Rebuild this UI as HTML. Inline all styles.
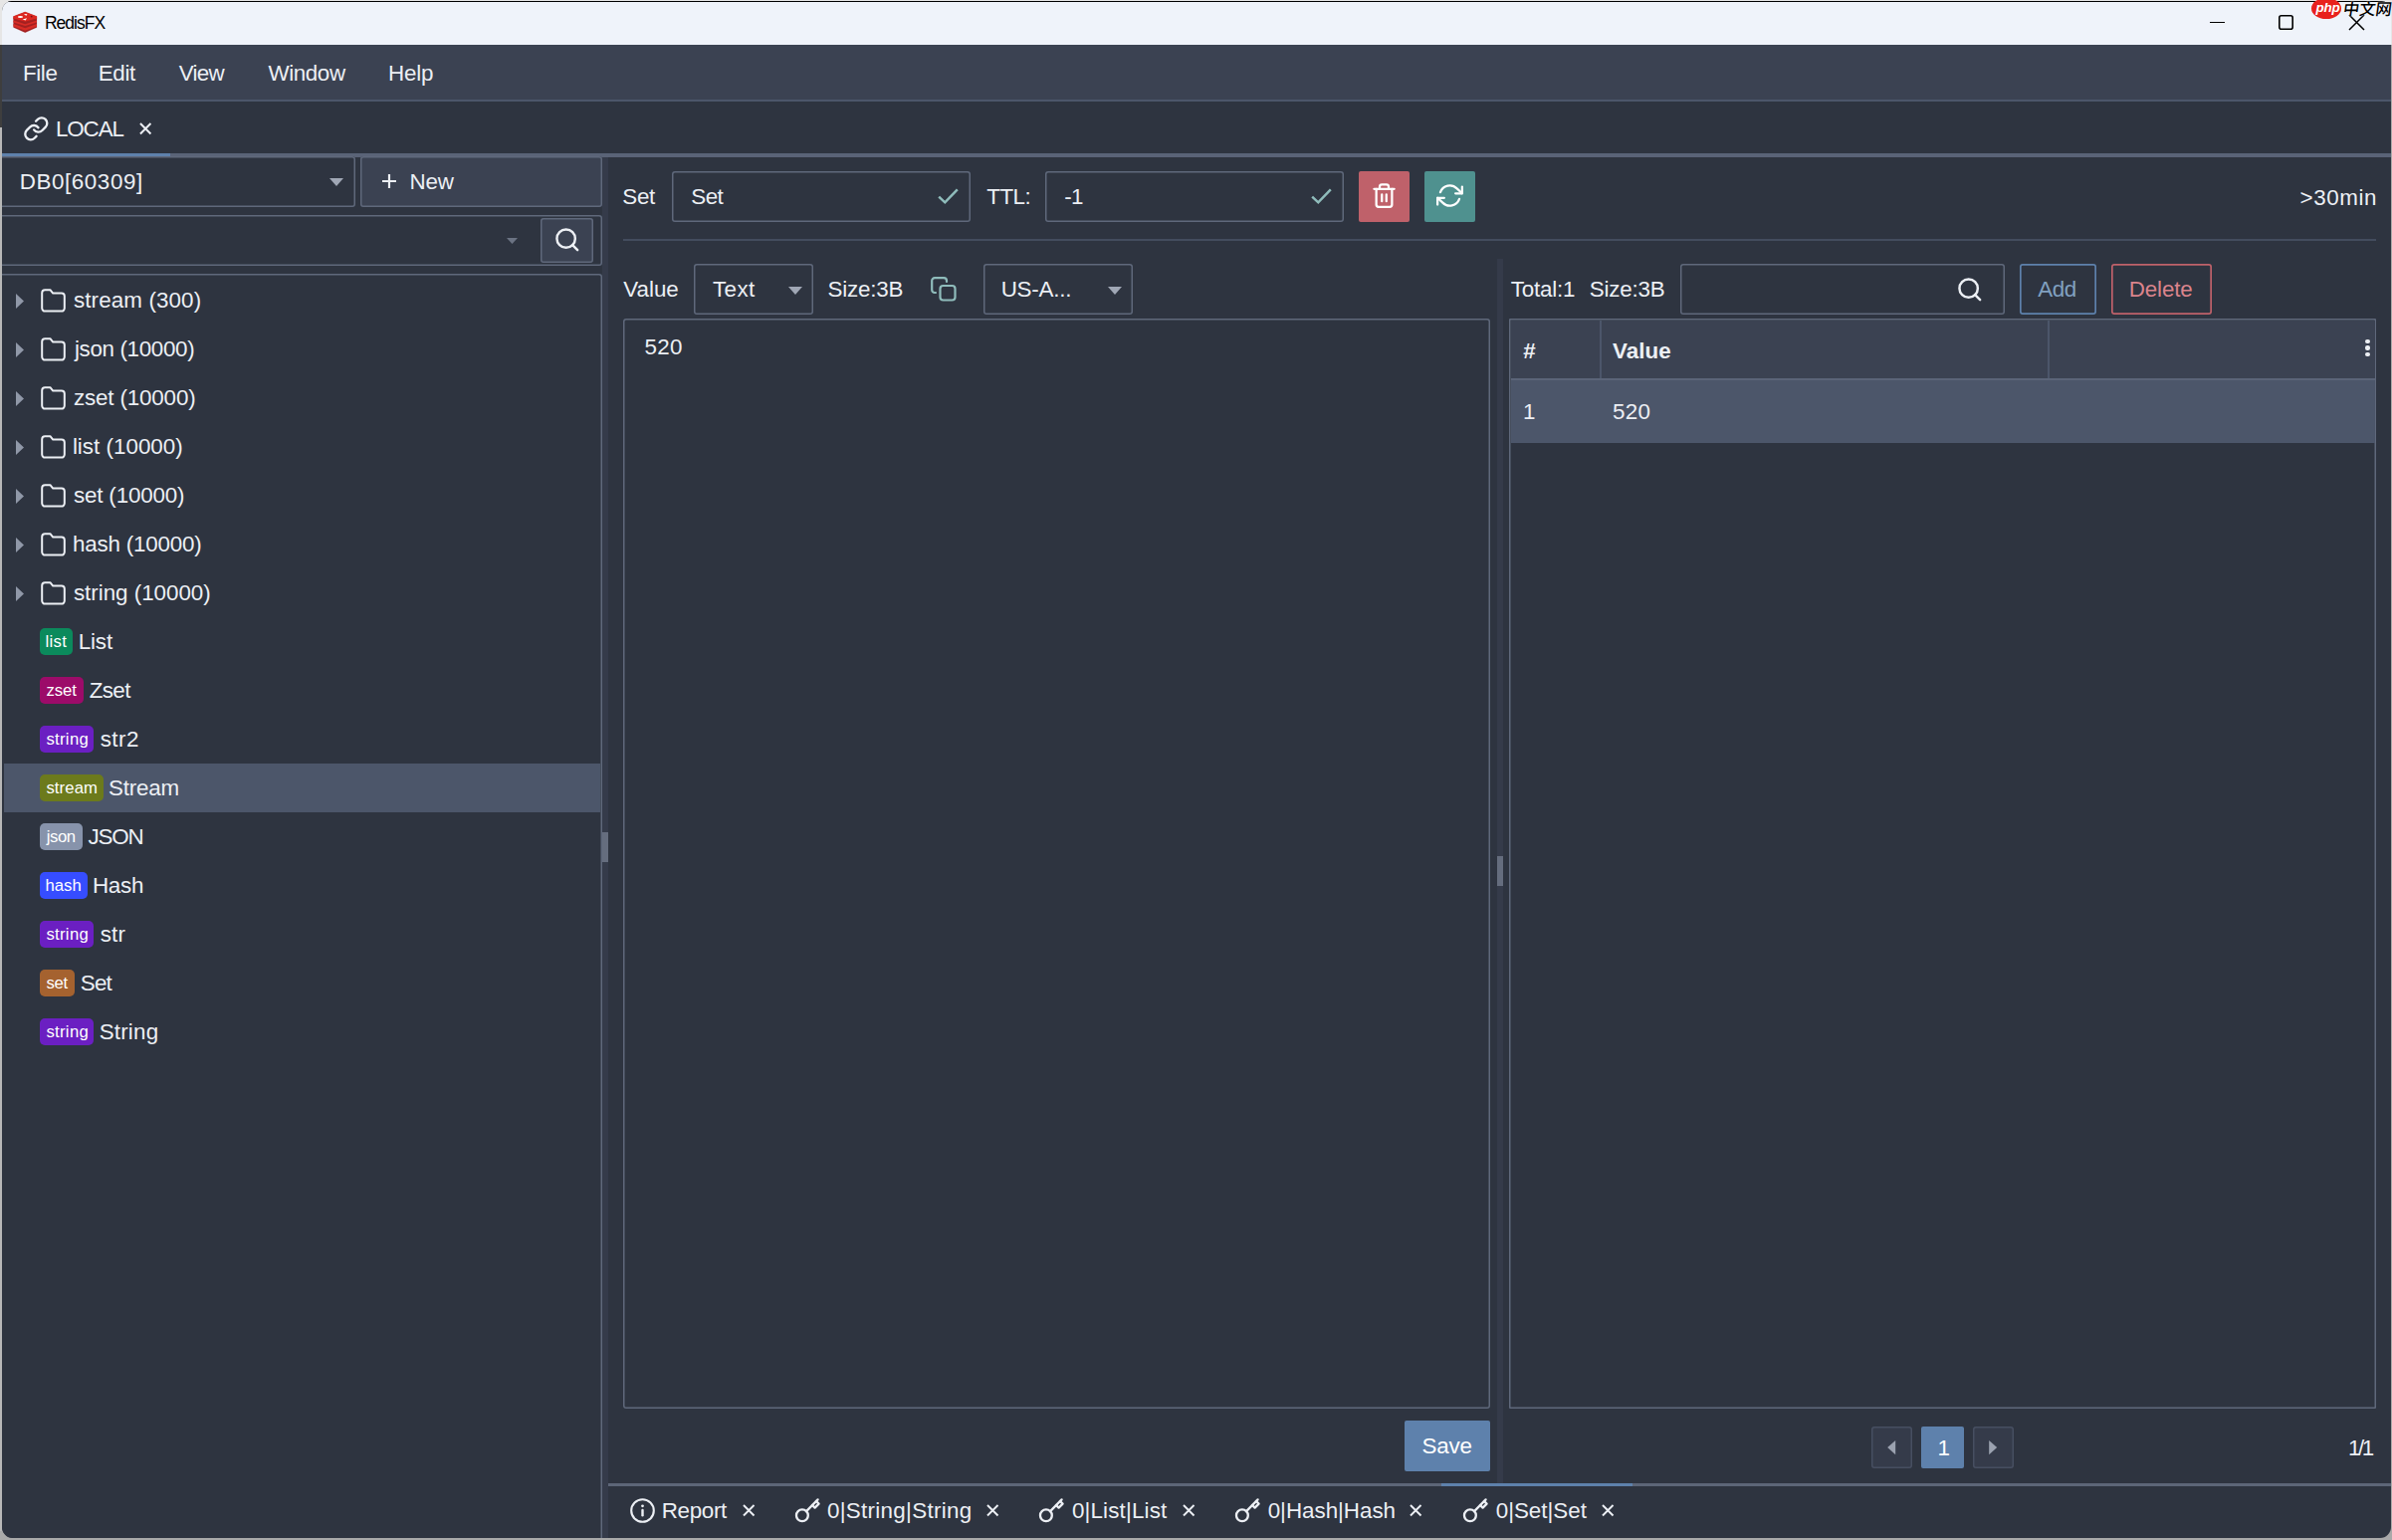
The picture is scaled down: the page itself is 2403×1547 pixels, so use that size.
<!DOCTYPE html><html lang="en"><head><meta charset="utf-8"><title>RedisFX</title><style>
*{box-sizing:border-box;margin:0;padding:0}
html,body{width:2403px;height:1547px;overflow:hidden}
body{background:#a9a9a9;font-family:"Liberation Sans","Noto Sans CJK SC",sans-serif;font-size:21px;color:#eceff4;position:relative}
.a{position:absolute}
.t{position:absolute;white-space:nowrap;line-height:24px;font-size:21px;color:#eceff4;letter-spacing:.55px}
.win{position:absolute;left:2px;top:1px;width:2399.8px;height:1543.8px;background:#2e3440;border-radius:10px 10px 11px 11px;overflow:hidden}
.box{position:absolute;border-radius:3px;background:#2e3440}
.sub{background:#3b4252}
.badge{position:absolute;height:27px;border-radius:5px;color:#fff;font-size:16.5px;line-height:27px;text-align:center;letter-spacing:.3px;white-space:nowrap}
svg{position:absolute;overflow:visible}
</style></head><body>
<div class="a" style="left:0;top:0;width:2403px;height:45px;background:#e6e6e6"></div>
<div class="a" style="left:0;top:45px;width:3px;height:82.5px;background:#3e3e3e"></div>
<div class="a" style="left:0;top:127.5px;width:3px;height:1410px;background:#b8b8b8"></div>
<div class="win">
<div class="a" style="left:0px;top:0px;width:2400px;height:1px;background:#000;"></div>
<div class="a" style="left:0px;top:1px;width:2400px;height:43px;background:#eff3fa;"></div>
<svg style="left:6px;top:5px;" width="36" height="32" viewBox="0 0 1732 1540"><path d="M265 505L830 290L1395 505V1035L830 1285L265 1035Z" fill="#a32121" stroke="#a32121" stroke-width="8" stroke-linejoin="round"/><path d="M265 870L830 1065L1395 870V990L830 1190L265 990Z" fill="#d82c26"/><path d="M265 700L830 875L1395 700V790L830 965L265 790Z" fill="#d82c26"/><path d="M265 505L830 290L1395 505V630L830 770L265 630Z" fill="#dc2821" stroke="#dc2821" stroke-width="8" stroke-linejoin="round"/><path d="M272 600L830 760L1388 600V640L830 815L272 640Z" fill="#a82222"/><ellipse cx="600" cy="525" rx="125" ry="48" fill="#fff"/><path d="M765 385L935 390L880 485Z" fill="#fbe5e3"/><path d="M705 650L915 585L850 695Z" fill="#fff"/><ellipse cx="1140" cy="515" rx="45" ry="40" fill="#7a1414"/></svg>
<div class="t" style="left:42.90px;top:9.60px;line-height:24px;font-size:17.5px;letter-spacing:-0.988px;color:#000;">RedisFX</div>
<div class="a" style="left:2218px;top:21px;width:15px;height:1px;background:#000;"></div>
<svg style="left:2287px;top:14px;" width="15" height="15" viewBox="0 0 15 15"><rect x="0.8" y="0.8" width="13.4" height="13.4" rx="2" fill="none" stroke="#000" stroke-width="1.6"/></svg>
<svg style="left:2358px;top:14px;" width="15" height="15" viewBox="0 0 15 15"><path d="M0 0L15 15M15 0L0 15" stroke="#000" stroke-width="1.5" fill="none"/></svg>
<div class="a" style="left:0px;top:44px;width:2400px;height:56px;background:#3b4252;"></div>
<div class="a" style="left:0px;top:99px;width:2400px;height:2px;background:#4c566a;"></div>
<div class="t" style="left:21.00px;top:60.60px;line-height:24px;font-size:22.4px;letter-spacing:-0.409px;">File</div>
<div class="t" style="left:96.80px;top:60.60px;line-height:24px;font-size:22.4px;letter-spacing:-0.387px;">Edit</div>
<div class="t" style="left:177.80px;top:60.60px;line-height:24px;font-size:22.4px;letter-spacing:-0.719px;">View</div>
<div class="t" style="left:267.60px;top:60.60px;line-height:24px;font-size:22.4px;letter-spacing:-0.433px;">Window</div>
<div class="t" style="left:388.00px;top:60.60px;line-height:24px;font-size:22.4px;letter-spacing:-0.232px;">Help</div>
<div class="a" style="left:0px;top:153px;width:2400px;height:4px;background:#5a6377;"></div>
<div class="a" style="left:0px;top:153px;width:169px;height:4px;background:#5e81ac;"></div>
<svg style="left:21.2px;top:114.95px;" width="26.6" height="26.6" viewBox="0 0 24 24"><g fill="none" stroke="#eceff4" stroke-width="2.1" stroke-linecap="round" stroke-linejoin="round"><path d="M10 13a5 5 0 0 0 7.54.54l3-3a5 5 0 0 0-7.07-7.07l-1.72 1.71"/><path d="M14 11a5 5 0 0 0-7.54-.54l-3 3a5 5 0 0 0 7.07 7.07l1.71-1.71"/></g></svg>
<div class="t" style="left:53.90px;top:116.60px;line-height:24px;font-size:22.4px;letter-spacing:-1.068px;">LOCAL</div>
<svg style="left:137.8px;top:121.9px;" width="12.4" height="12.4" viewBox="0 0 13 13"><path d="M1 1L12 12M12 1L1 12" stroke="#eceff4" stroke-width="2.1" fill="none"/></svg>
<div class="box " style="left:-8px;top:156px;width:363px;height:51px;box-shadow:inset 0 0 0 1.5px #5f687b;"></div>
<div class="t" style="left:17.70px;top:169.50px;line-height:24px;font-size:22.4px;letter-spacing:0.584px;">DB0[60309]</div>
<svg style="left:329px;top:177.5px;" width="14" height="8" viewBox="0 0 14 8"><path d="M0 0H14L7 8Z" fill="#a0a7b5"/></svg>
<div class="box sub" style="left:360px;top:156px;width:243px;height:51px;box-shadow:inset 0 0 0 1.5px #5f687b;"></div>
<svg style="left:382px;top:173.5px;" width="14" height="14" viewBox="0 0 14 14"><path d="M7 0V14M0 7H14" stroke="#eceff4" stroke-width="2.2" fill="none"/></svg>
<div class="t" style="left:409.60px;top:169.50px;line-height:24px;font-size:22.4px;letter-spacing:-0.261px;">New</div>
<div class="box " style="left:-8px;top:215px;width:611px;height:51px;box-shadow:inset 0 0 0 1.5px #5f687b;"></div>
<svg style="left:507px;top:237.5px;" width="11" height="6" viewBox="0 0 11 6"><path d="M0 0H11L5.5 6Z" fill="#6b7383"/></svg>
<div class="box sub" style="left:541px;top:217.5px;width:53px;height:45.5px;box-shadow:inset 0 0 0 1.5px #5f687b;"></div>
<svg style="left:553.55px;top:226.45px;" width="27.6" height="27.6" viewBox="0 0 24 24"><g fill="none" stroke="#eceff4" stroke-width="2.15" stroke-linecap="round"><circle cx="11" cy="11" r="8"/><path d="M21 21l-4.35-4.35"/></g></svg>
<div class="box " style="left:-8px;top:274px;width:611px;height:1285px;box-shadow:inset 0 0 0 1.5px #5f687b;"></div>
<div class="a" style="left:2px;top:766px;width:599px;height:49px;background:#4c566a;"></div>
<svg style="left:14px;top:293.5px;" width="8" height="15" viewBox="0 0 8 15"><path d="M0 0L8 7.5L0 15Z" fill="#9098a8"/></svg>
<svg style="left:39px;top:288.55px;" width="25" height="24" viewBox="0 0 25 24"><path d="M1.2 4.2a3 3 0 0 1 3-3h5.2l2.8 3.4h8.6a3 3 0 0 1 3 3v12a3 3 0 0 1-3 3H4.2a3 3 0 0 1-3-3z" fill="none" stroke="#eceff4" stroke-width="2" stroke-linejoin="round"/></svg>
<div class="t" style="left:71.90px;top:289.00px;line-height:24px;font-size:22.4px;letter-spacing:0.121px;">stream (300)</div>
<svg style="left:14px;top:342.5px;" width="8" height="15" viewBox="0 0 8 15"><path d="M0 0L8 7.5L0 15Z" fill="#9098a8"/></svg>
<svg style="left:39px;top:337.55px;" width="25" height="24" viewBox="0 0 25 24"><path d="M1.2 4.2a3 3 0 0 1 3-3h5.2l2.8 3.4h8.6a3 3 0 0 1 3 3v12a3 3 0 0 1-3 3H4.2a3 3 0 0 1-3-3z" fill="none" stroke="#eceff4" stroke-width="2" stroke-linejoin="round"/></svg>
<div class="t" style="left:72.90px;top:338.00px;line-height:24px;font-size:22.4px;letter-spacing:-0.338px;">json (10000)</div>
<svg style="left:14px;top:391.5px;" width="8" height="15" viewBox="0 0 8 15"><path d="M0 0L8 7.5L0 15Z" fill="#9098a8"/></svg>
<svg style="left:39px;top:386.55px;" width="25" height="24" viewBox="0 0 25 24"><path d="M1.2 4.2a3 3 0 0 1 3-3h5.2l2.8 3.4h8.6a3 3 0 0 1 3 3v12a3 3 0 0 1-3 3H4.2a3 3 0 0 1-3-3z" fill="none" stroke="#eceff4" stroke-width="2" stroke-linejoin="round"/></svg>
<div class="t" style="left:71.90px;top:387.00px;line-height:24px;font-size:22.4px;letter-spacing:-0.155px;">zset (10000)</div>
<svg style="left:14px;top:440.5px;" width="8" height="15" viewBox="0 0 8 15"><path d="M0 0L8 7.5L0 15Z" fill="#9098a8"/></svg>
<svg style="left:39px;top:435.55px;" width="25" height="24" viewBox="0 0 25 24"><path d="M1.2 4.2a3 3 0 0 1 3-3h5.2l2.8 3.4h8.6a3 3 0 0 1 3 3v12a3 3 0 0 1-3 3H4.2a3 3 0 0 1-3-3z" fill="none" stroke="#eceff4" stroke-width="2" stroke-linejoin="round"/></svg>
<div class="t" style="left:70.90px;top:436.00px;line-height:24px;font-size:22.4px;letter-spacing:0.009px;">list (10000)</div>
<svg style="left:14px;top:489.5px;" width="8" height="15" viewBox="0 0 8 15"><path d="M0 0L8 7.5L0 15Z" fill="#9098a8"/></svg>
<svg style="left:39px;top:484.55px;" width="25" height="24" viewBox="0 0 25 24"><path d="M1.2 4.2a3 3 0 0 1 3-3h5.2l2.8 3.4h8.6a3 3 0 0 1 3 3v12a3 3 0 0 1-3 3H4.2a3 3 0 0 1-3-3z" fill="none" stroke="#eceff4" stroke-width="2" stroke-linejoin="round"/></svg>
<div class="t" style="left:71.90px;top:485.00px;line-height:24px;font-size:22.4px;letter-spacing:-0.161px;">set (10000)</div>
<svg style="left:14px;top:538.5px;" width="8" height="15" viewBox="0 0 8 15"><path d="M0 0L8 7.5L0 15Z" fill="#9098a8"/></svg>
<svg style="left:39px;top:533.55px;" width="25" height="24" viewBox="0 0 25 24"><path d="M1.2 4.2a3 3 0 0 1 3-3h5.2l2.8 3.4h8.6a3 3 0 0 1 3 3v12a3 3 0 0 1-3 3H4.2a3 3 0 0 1-3-3z" fill="none" stroke="#eceff4" stroke-width="2" stroke-linejoin="round"/></svg>
<div class="t" style="left:70.90px;top:534.00px;line-height:24px;font-size:22.4px;letter-spacing:-0.199px;">hash (10000)</div>
<svg style="left:14px;top:587.5px;" width="8" height="15" viewBox="0 0 8 15"><path d="M0 0L8 7.5L0 15Z" fill="#9098a8"/></svg>
<svg style="left:39px;top:582.55px;" width="25" height="24" viewBox="0 0 25 24"><path d="M1.2 4.2a3 3 0 0 1 3-3h5.2l2.8 3.4h8.6a3 3 0 0 1 3 3v12a3 3 0 0 1-3 3H4.2a3 3 0 0 1-3-3z" fill="none" stroke="#eceff4" stroke-width="2" stroke-linejoin="round"/></svg>
<div class="t" style="left:71.90px;top:583.00px;line-height:24px;font-size:22.4px;letter-spacing:-0.022px;">string (10000)</div>
<div class="a" style="left:38px;top:630.0px;width:33.3px;height:27px;border-radius:5px;background:#0b8a5c"></div>
<div class="t" style="left:43.40px;top:631.70px;line-height:24px;font-size:16.7px;letter-spacing:0.347px;color:#fff;">list</div>
<div class="t" style="left:76.70px;top:631.70px;line-height:24px;font-size:22.4px;letter-spacing:-0.141px;">List</div>
<div class="a" style="left:38px;top:679.0px;width:43.599999999999994px;height:27px;border-radius:5px;background:#9c0b69"></div>
<div class="t" style="left:44.40px;top:680.70px;line-height:24px;font-size:16.7px;letter-spacing:-0.056px;color:#fff;">zset</div>
<div class="t" style="left:87.70px;top:680.70px;line-height:24px;font-size:22.4px;letter-spacing:-0.608px;">Zset</div>
<div class="a" style="left:38px;top:728.0px;width:54.3px;height:27px;border-radius:5px;background:#6b1fc2"></div>
<div class="t" style="left:44.40px;top:729.70px;line-height:24px;font-size:16.7px;letter-spacing:0.315px;color:#fff;">string</div>
<div class="t" style="left:98.70px;top:729.70px;line-height:24px;font-size:22.4px;letter-spacing:0.443px;">str2</div>
<div class="a" style="left:38px;top:777.0px;width:63.8px;height:27px;border-radius:5px;background:#6c7a1c"></div>
<div class="t" style="left:44.40px;top:778.70px;line-height:24px;font-size:16.7px;letter-spacing:0.120px;color:#fff;">stream</div>
<div class="t" style="left:106.90px;top:778.70px;line-height:24px;font-size:22.4px;letter-spacing:-0.183px;">Stream</div>
<div class="a" style="left:38px;top:826.0px;width:42.900000000000006px;height:27px;border-radius:5px;background:#8793ab"></div>
<div class="t" style="left:44.80px;top:827.70px;line-height:24px;font-size:16.7px;letter-spacing:-0.477px;color:#fff;">json</div>
<div class="t" style="left:86.50px;top:827.70px;line-height:24px;font-size:22.4px;letter-spacing:-1.182px;">JSON</div>
<div class="a" style="left:38px;top:875.0px;width:47.900000000000006px;height:27px;border-radius:5px;background:#364dff"></div>
<div class="t" style="left:43.40px;top:876.70px;line-height:24px;font-size:16.7px;letter-spacing:0.065px;color:#fff;">hash</div>
<div class="t" style="left:91.00px;top:876.70px;line-height:24px;font-size:22.4px;letter-spacing:-0.306px;">Hash</div>
<div class="a" style="left:38px;top:924.0px;width:54.3px;height:27px;border-radius:5px;background:#6b1fc2"></div>
<div class="t" style="left:44.40px;top:925.70px;line-height:24px;font-size:16.7px;letter-spacing:0.315px;color:#fff;">string</div>
<div class="t" style="left:98.70px;top:925.70px;line-height:24px;font-size:22.4px;letter-spacing:0.142px;">str</div>
<div class="a" style="left:38px;top:973.0px;width:35.099999999999994px;height:27px;border-radius:5px;background:#a5622f"></div>
<div class="t" style="left:44.40px;top:974.70px;line-height:24px;font-size:16.7px;letter-spacing:-0.312px;color:#fff;">set</div>
<div class="t" style="left:78.80px;top:974.70px;line-height:24px;font-size:22.4px;letter-spacing:-0.793px;">Set</div>
<div class="a" style="left:38px;top:1022.0px;width:54.3px;height:27px;border-radius:5px;background:#6b1fc2"></div>
<div class="t" style="left:44.40px;top:1023.70px;line-height:24px;font-size:16.7px;letter-spacing:0.315px;color:#fff;">string</div>
<div class="t" style="left:97.70px;top:1023.70px;line-height:24px;font-size:22.4px;letter-spacing:0.192px;">String</div>
<div class="a" style="left:603px;top:156.5px;width:6px;height:1387.5px;background:#353b4a;"></div>
<div class="a" style="left:602.5px;top:835px;width:6.5px;height:30px;background:#656d7e;"></div>
<div class="t" style="left:623.30px;top:185.00px;line-height:24px;font-size:22.4px;letter-spacing:-0.343px;">Set</div>
<div class="box " style="left:673px;top:171px;width:300px;height:50.5px;box-shadow:inset 0 0 0 1.5px #5f687b;"></div>
<div class="t" style="left:692.20px;top:185.00px;line-height:24px;font-size:22.4px;letter-spacing:-0.493px;">Set</div>
<svg style="left:940px;top:188px;" width="22" height="17" viewBox="0 0 22 17"><path d="M1.2 8.6L7.3 14.3L19.8 1.4" fill="none" stroke="#8fbcbb" stroke-width="2.5" stroke-linejoin="miter"/></svg>
<div class="t" style="left:989.30px;top:185.00px;line-height:24px;font-size:22.4px;letter-spacing:-0.536px;">TTL:</div>
<div class="box " style="left:1048px;top:171px;width:300px;height:50.5px;box-shadow:inset 0 0 0 1.5px #5f687b;"></div>
<div class="t" style="left:1067.30px;top:185.00px;line-height:24px;font-size:22.4px;letter-spacing:-0.756px;">-1</div>
<svg style="left:1315px;top:188px;" width="22" height="17" viewBox="0 0 22 17"><path d="M1.2 8.6L7.3 14.3L19.8 1.4" fill="none" stroke="#8fbcbb" stroke-width="2.5" stroke-linejoin="miter"/></svg>
<div class="a" style="left:1363px;top:171px;width:51px;height:50.5px;background:#bf616a;border-radius:2px"></div>
<svg style="left:1375px;top:182.2px;" width="27" height="27" viewBox="0 0 24 24"><g fill="none" stroke="#fff" stroke-width="2" stroke-linecap="round" stroke-linejoin="round"><path d="M3 6h18"/><path d="M19 6v14a2 2 0 0 1-2 2H7a2 2 0 0 1-2-2V6m3 0V4a2 2 0 0 1 2-2h4a2 2 0 0 1 2 2v2"/><path d="M10 11v6M14 11v6"/></g></svg>
<div class="a" style="left:1429px;top:171px;width:51px;height:50.5px;background:#4f918f;border-radius:2px"></div>
<svg style="left:1440.8px;top:182.3px;" width="27" height="27" viewBox="0 0 24 24"><g fill="none" stroke="#fff" stroke-width="2" stroke-linecap="round" stroke-linejoin="round"><path d="M23 4v6h-6"/><path d="M1 20v-6h6"/><path d="M3.51 9a9 9 0 0 1 14.85-3.36L23 10M1 14l4.64 4.36A9 9 0 0 0 20.49 15"/></g></svg>
<div class="t" style="left:2308.50px;top:185.50px;line-height:24px;font-size:22.4px;letter-spacing:0.579px;">&gt;30min</div>
<div class="a" style="left:624px;top:239px;width:1761px;height:2px;background:#434c5e;"></div>
<div class="t" style="left:624.30px;top:278.00px;line-height:24px;font-size:22.4px;letter-spacing:-0.038px;">Value</div>
<div class="box " style="left:695px;top:264px;width:120px;height:51px;box-shadow:inset 0 0 0 1.5px #5f687b;"></div>
<div class="t" style="left:713.90px;top:278.00px;line-height:24px;font-size:22.4px;letter-spacing:0.453px;">Text</div>
<svg style="left:790px;top:286.5px;" width="14" height="8" viewBox="0 0 14 8"><path d="M0 0H14L7 8Z" fill="#a0a7b5"/></svg>
<div class="t" style="left:829.50px;top:278.00px;line-height:24px;font-size:22.4px;letter-spacing:-0.188px;">Size:3B</div>
<svg style="left:933px;top:277px;" width="26" height="25" viewBox="0 0 26 25"><g fill="none" stroke="#8fbcbb" stroke-width="2.2" stroke-linecap="round" stroke-linejoin="round"><rect x="9.5" y="9" width="15" height="14.5" rx="3"/><path d="M5 16H4a2.8 2.8 0 0 1-2.8-2.8V4a2.8 2.8 0 0 1 2.8-2.8h9.2A2.8 2.8 0 0 1 16 4v1"/></g></svg>
<div class="box " style="left:986px;top:264px;width:150px;height:51px;box-shadow:inset 0 0 0 1.5px #5f687b;"></div>
<div class="t" style="left:1003.70px;top:278.00px;line-height:24px;font-size:22.4px;letter-spacing:-0.239px;">US-A...</div>
<svg style="left:1111px;top:286.5px;" width="14" height="8" viewBox="0 0 14 8"><path d="M0 0H14L7 8Z" fill="#a0a7b5"/></svg>
<div class="box " style="left:624px;top:319px;width:871px;height:1095px;box-shadow:inset 0 0 0 1.5px #5f687b;"></div>
<div class="t" style="left:645.60px;top:335.50px;line-height:24px;font-size:22.4px;letter-spacing:0.247px;">520</div>
<div class="a" style="left:1409px;top:1426px;width:86px;height:50.5px;background:#5e81ac;border-radius:2px"></div>
<div class="t" style="left:1426.60px;top:1439.50px;line-height:24px;font-size:22.4px;letter-spacing:-0.261px;color:#fff;">Save</div>
<div class="a" style="left:1502px;top:259px;width:6px;height:1230px;background:#353b4a;"></div>
<div class="a" style="left:1502px;top:859px;width:6px;height:30px;background:#656d7e;"></div>
<div class="t" style="left:1515.80px;top:278.00px;line-height:24px;font-size:22.4px;letter-spacing:-0.219px;">Total:1</div>
<div class="t" style="left:1594.70px;top:278.00px;line-height:24px;font-size:22.4px;letter-spacing:-0.188px;">Size:3B</div>
<div class="box " style="left:1686px;top:264px;width:326px;height:51px;box-shadow:inset 0 0 0 1.5px #5f687b;"></div>
<svg style="left:1962.95px;top:275.85px;" width="27.6" height="27.6" viewBox="0 0 24 24"><g fill="none" stroke="#eceff4" stroke-width="2.15" stroke-linecap="round"><circle cx="11" cy="11" r="8"/><path d="M21 21l-4.35-4.35"/></g></svg>
<div class="box " style="left:2026.5px;top:264px;width:77.5px;height:51px;box-shadow:inset 0 0 0 1.7px #5e81ac;"></div>
<div class="t" style="left:2045.20px;top:278.00px;line-height:24px;font-size:22.4px;letter-spacing:-0.393px;color:#81a1c1;">Add</div>
<div class="box " style="left:2118.5px;top:264px;width:101.5px;height:51px;box-shadow:inset 0 0 0 1.7px #bf616a;"></div>
<div class="t" style="left:2136.80px;top:278.00px;line-height:24px;font-size:22.4px;letter-spacing:-0.154px;color:#db848c;">Delete</div>
<div class="box " style="left:1514.4px;top:319px;width:870.5999999999999px;height:1095px;box-shadow:inset 0 0 0 1.5px #5f687b;border-radius:1px;"></div>
<div class="a" style="left:1516px;top:320.5px;width:867.5px;height:58.5px;background:#3b4252;"></div>
<div class="a" style="left:1516px;top:379px;width:867.5px;height:1.6999999999999886px;background:#5b6478;"></div>
<div class="a" style="left:1605px;top:321px;width:1.5px;height:58px;background:#4c566a;"></div>
<div class="a" style="left:2055px;top:321px;width:1.5px;height:58px;background:#4c566a;"></div>
<div class="t" style="left:1528.20px;top:340.00px;line-height:24px;font-size:22.4px;letter-spacing:0.000px;font-weight:bold;">#</div>
<div class="t" style="left:1618.00px;top:340.00px;line-height:24px;font-size:22.4px;letter-spacing:0.063px;font-weight:bold;">Value</div>
<div class="a" style="left:2374.3px;top:339.9px;width:4.4px;height:4.4px;border-radius:50%;background:#eceff4"></div>
<div class="a" style="left:2374.3px;top:346.3px;width:4.4px;height:4.4px;border-radius:50%;background:#eceff4"></div>
<div class="a" style="left:2374.3px;top:352.7px;width:4.4px;height:4.4px;border-radius:50%;background:#eceff4"></div>
<div class="a" style="left:1516px;top:380.5px;width:867.5px;height:63.5px;background:#4c566a;"></div>
<div class="t" style="left:1528.00px;top:401.00px;line-height:24px;font-size:22.4px;letter-spacing:0.000px;">1</div>
<div class="t" style="left:1618.00px;top:401.00px;line-height:24px;font-size:22.4px;letter-spacing:0.297px;">520</div>
<div class="box " style="left:1878px;top:1432px;width:41px;height:41.5px;box-shadow:inset 0 0 0 1.5px #474f61;background:#353b4a;"></div>
<svg style="left:1894.3px;top:1446.2px;width:8.4px;height:14.2px" width="8.4" height="14.2" viewBox="0 0 9 16"><path d="M9 0L0 8L9 16Z" fill="#9ba2b0"/></svg>
<div class="a" style="left:1928px;top:1432px;width:43px;height:41.5px;background:#5e81ac;border-radius:2px"></div>
<div class="t" style="left:1944.50px;top:1441.50px;line-height:24px;font-size:22.4px;letter-spacing:0.000px;color:#fff;">1</div>
<div class="box " style="left:1980px;top:1432px;width:41px;height:41.5px;box-shadow:inset 0 0 0 1.5px #474f61;background:#353b4a;"></div>
<svg style="left:1996.4px;top:1446.2px;width:8.4px;height:14.2px" width="8.4" height="14.2" viewBox="0 0 9 16"><path d="M0 0L9 8L0 16Z" fill="#9ba2b0"/></svg>
<div class="t" style="left:2357.00px;top:1442.00px;line-height:24px;font-size:22.4px;letter-spacing:-2.437px;">1/1</div>
<div class="a" style="left:609px;top:1489px;width:1791px;height:3px;background:#5d6678;"></div>
<div class="a" style="left:1446px;top:1489px;width:192px;height:3px;background:#5e81ac;"></div>
<svg style="left:631px;top:1503.7px;" width="25" height="25" viewBox="0 0 25 25"><circle cx="12.5" cy="12.5" r="11.3" fill="none" stroke="#eceff4" stroke-width="2.1"/><path d="M12.5 12v5.2" stroke="#eceff4" stroke-width="2.4" stroke-linecap="round"/><circle cx="12.5" cy="7.8" r="1.4" fill="#eceff4"/></svg>
<div class="t" style="left:662.80px;top:1505.20px;line-height:24px;font-size:22.4px;letter-spacing:-0.357px;">Report</div>
<svg style="left:743.8px;top:1509.6px;" width="12.5" height="12.5" viewBox="0 0 13 13"><path d="M1 1L12 12M12 1L1 12" stroke="#eceff4" stroke-width="2" fill="none"/></svg>
<svg style="left:797px;top:1504px;" width="25" height="25" viewBox="0 0 25 25"><g fill="none" stroke="#eceff4" stroke-width="2.3" stroke-linecap="round" stroke-linejoin="round"><circle cx="6.9" cy="17.3" r="5.9"/><path d="M11.1 13.1L22.6 1.4"/><path d="M17 7L19.6 9.6L23.6 5.6L21 3"/></g></svg>
<div class="t" style="left:829.00px;top:1505.20px;line-height:24px;font-size:22.4px;letter-spacing:0.292px;">0|String|String</div>
<svg style="left:988.8px;top:1509.6px;" width="12.5" height="12.5" viewBox="0 0 13 13"><path d="M1 1L12 12M12 1L1 12" stroke="#eceff4" stroke-width="2" fill="none"/></svg>
<svg style="left:1042px;top:1504px;" width="25" height="25" viewBox="0 0 25 25"><g fill="none" stroke="#eceff4" stroke-width="2.3" stroke-linecap="round" stroke-linejoin="round"><circle cx="6.9" cy="17.3" r="5.9"/><path d="M11.1 13.1L22.6 1.4"/><path d="M17 7L19.6 9.6L23.6 5.6L21 3"/></g></svg>
<div class="t" style="left:1074.90px;top:1505.20px;line-height:24px;font-size:22.4px;letter-spacing:0.155px;">0|List|List</div>
<svg style="left:1185.8px;top:1509.6px;" width="12.5" height="12.5" viewBox="0 0 13 13"><path d="M1 1L12 12M12 1L1 12" stroke="#eceff4" stroke-width="2" fill="none"/></svg>
<svg style="left:1239px;top:1504px;" width="25" height="25" viewBox="0 0 25 25"><g fill="none" stroke="#eceff4" stroke-width="2.3" stroke-linecap="round" stroke-linejoin="round"><circle cx="6.9" cy="17.3" r="5.9"/><path d="M11.1 13.1L22.6 1.4"/><path d="M17 7L19.6 9.6L23.6 5.6L21 3"/></g></svg>
<div class="t" style="left:1271.70px;top:1505.20px;line-height:24px;font-size:22.4px;letter-spacing:-0.027px;">0|Hash|Hash</div>
<svg style="left:1414.3px;top:1509.6px;" width="12.5" height="12.5" viewBox="0 0 13 13"><path d="M1 1L12 12M12 1L1 12" stroke="#eceff4" stroke-width="2" fill="none"/></svg>
<svg style="left:1468px;top:1504px;" width="25" height="25" viewBox="0 0 25 25"><g fill="none" stroke="#eceff4" stroke-width="2.3" stroke-linecap="round" stroke-linejoin="round"><circle cx="6.9" cy="17.3" r="5.9"/><path d="M11.1 13.1L22.6 1.4"/><path d="M17 7L19.6 9.6L23.6 5.6L21 3"/></g></svg>
<div class="t" style="left:1500.70px;top:1505.20px;line-height:24px;font-size:22.4px;letter-spacing:-0.010px;">0|Set|Set</div>
<svg style="left:1606.8px;top:1509.6px;" width="12.5" height="12.5" viewBox="0 0 13 13"><path d="M1 1L12 12M12 1L1 12" stroke="#eceff4" stroke-width="2" fill="none"/></svg>
</div>
<div class="a" style="left:2322px;top:-2px;width:29.5px;height:21px;border-radius:50%;background:#e8211d"></div>
<div class="t" style="left:2326.5px;top:-2.5px;line-height:20px;font-size:13.5px;font-style:italic;font-weight:bold;color:#fff;letter-spacing:-.3px">php</div>
<div class="t" style="left:2354px;top:-1px;line-height:20px;font-size:16.3px;font-weight:500;color:#000;letter-spacing:0;transform:skewX(-8deg);text-shadow:0 0 1.5px #fff">中文网</div>
</body></html>
